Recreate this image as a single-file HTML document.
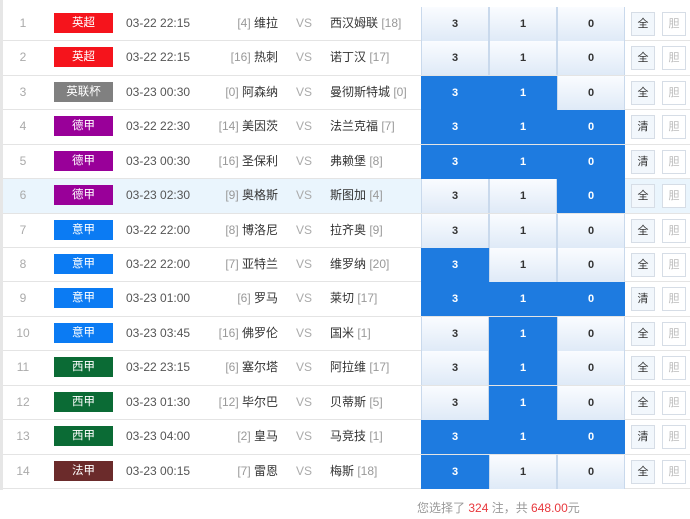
<!DOCTYPE html><html><head><meta charset="utf-8"><style>
*{margin:0;padding:0;box-sizing:border-box}
body{width:690px;height:519px;background:#fff;font-family:"Liberation Sans","Noto Sans CJK SC",sans-serif;position:relative;overflow:hidden;font-size:12px}
.lb{position:absolute;left:0;top:0;width:3px;height:490px;background:#e6e6e6}
.row{position:absolute;left:3px;width:687px;height:34.43px;border-bottom:1px solid #e4e4e4}
.row.hl{background:#eaf5fd}
.n,.t,.h,.vs,.a{position:absolute;top:0;line-height:33px;height:33px}
.n{left:0;width:40px;text-align:center;color:#aaa}
.lg{position:absolute;left:51px;top:6px;width:59px;height:20px;color:#fff;text-align:center;line-height:20px;font-size:11.5px}
.t{left:123px;color:#555}
.h{right:412px;color:#333;white-space:nowrap}
.vs{left:293px;color:#aaa}
.a{left:327px;color:#333;white-space:nowrap}
.g{color:#999}
.c{position:absolute;top:0;width:68px;height:34px;text-align:center;line-height:34px;font-weight:bold;font-size:11px;color:#333;background:linear-gradient(#fafcff,#dfeaf7);border-left:1px solid #c9d9ec;border-right:1px solid #c9d9ec}
.c.s{background:#1e7be0;color:#fff;border-color:#1e7be0}
.b{position:absolute;top:5px;width:24px;height:24px;border:1px solid #d6dde6;text-align:center;line-height:22px;font-size:11px;color:#333;background:#f2f7fc}
.b2{color:#bbb;background:#fff}
.ft{position:absolute;top:499px;left:417px;color:#999;font-size:12px}
.ft b{color:#e8383d;font-weight:normal}
</style></head><body>
<div class="lb"></div>
<div id="t"></div>
<div class="ft">您选择了 <b>324</b> 注，共 <b>648.00</b>元</div>
<script>
var d=[["英超","#f5141c","03-22 22:15","[4]","维拉","西汉姆联","[18]",""],
["英超","#f5141c","03-22 22:15","[16]","热刺","诺丁汉","[17]",""],
["英联杯","#808080","03-23 00:30","[0]","阿森纳","曼彻斯特城","[0]","31"],
["德甲","#990099","03-22 22:30","[14]","美因茨","法兰克福","[7]","310"],
["德甲","#990099","03-23 00:30","[16]","圣保利","弗赖堡","[8]","310"],
["德甲","#990099","03-23 02:30","[9]","奥格斯","斯图加","[4]","0"],
["意甲","#0b7bf3","03-22 22:00","[8]","博洛尼","拉齐奥","[9]",""],
["意甲","#0b7bf3","03-22 22:00","[7]","亚特兰","维罗纳","[20]","3"],
["意甲","#0b7bf3","03-23 01:00","[6]","罗马","莱切","[17]","310"],
["意甲","#0b7bf3","03-23 03:45","[16]","佛罗伦","国米","[1]","1"],
["西甲","#0b6b35","03-22 23:15","[6]","塞尔塔","阿拉维","[17]","1"],
["西甲","#0b6b35","03-23 01:30","[12]","毕尔巴","贝蒂斯","[5]","1"],
["西甲","#0b6b35","03-23 04:00","[2]","皇马","马竞技","[1]","310"],
["法甲","#6b2b2b","03-23 00:15","[7]","雷恩","梅斯","[18]","3"]];
var h="";d.forEach(function(r,i){var top=7+i*34.43;var s=r[7];var all=s=="310";
h+='<div class="row'+(i==5?' hl':'')+'" style="top:'+top+'px"><div class="n">'+(i+1)+'</div><div class="lg" style="background:'+r[1]+'">'+r[0]+'</div><div class="t">'+r[2]+'</div><div class="h"><span class="g">'+r[3]+'</span> '+r[4]+'</div><div class="vs">VS</div><div class="a">'+r[5]+' <span class="g">'+r[6]+'</span></div>';
["3","1","0"].forEach(function(v,j){h+='<div class="c'+(s.indexOf(v)>=0?' s':'')+'" style="left:'+(418+j*68)+'px">'+v+'</div>'});
h+='<div class="b" style="left:628px">'+(all?'清':'全')+'</div><div class="b b2" style="left:659px">胆</div></div>'});
document.getElementById("t").innerHTML=h;
</script></body></html>
